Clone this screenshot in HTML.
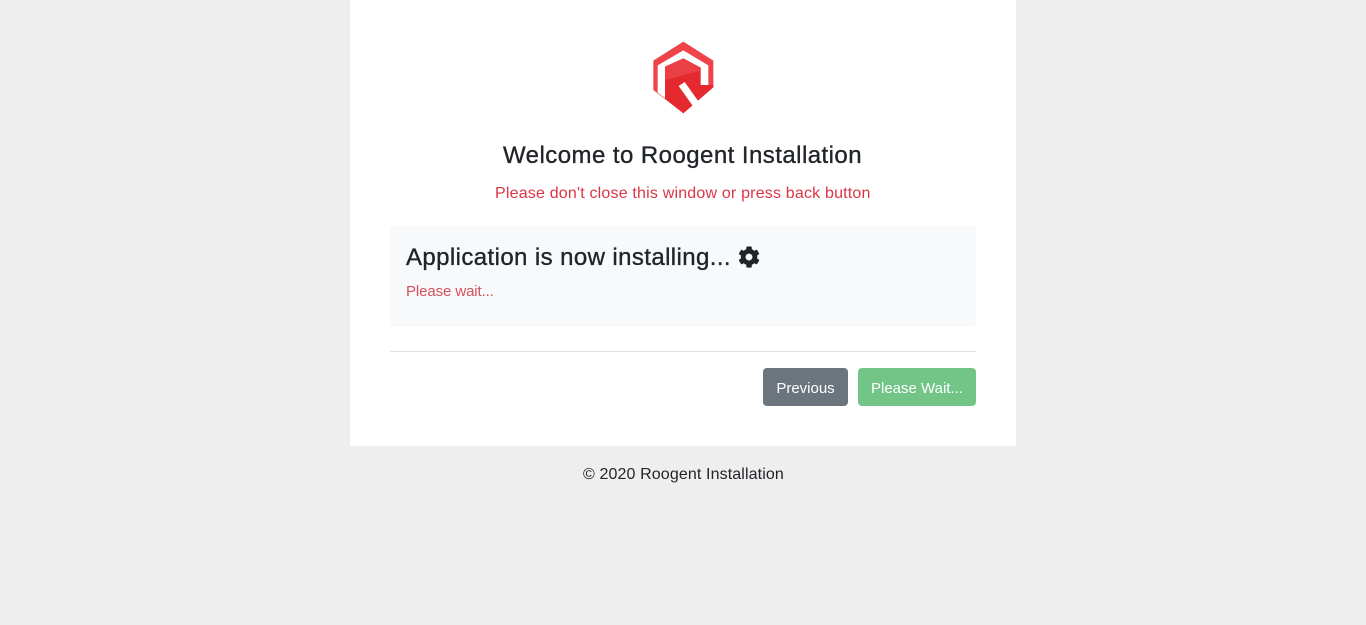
<!DOCTYPE html>
<html>
<head>
<meta charset="utf-8">
<style>
html,body{margin:0;padding:0;width:1366px;height:625px;overflow:hidden;background:#eee;font-family:"Liberation Sans",sans-serif;color:#212529}
#card{position:absolute;left:350px;top:0;width:666px;height:446px;background:#fff}
.t{position:absolute;white-space:nowrap;line-height:1.2}
.h{-webkit-text-stroke:.35px currentColor}
#box{position:absolute;left:390px;top:226px;width:586px;height:101px;background:#f8f9fa;border-radius:3px}
#hr{position:absolute;left:390px;top:351px;width:586px;height:1px;background:#e2e2e2}
.btn{position:absolute;top:368px;height:38px;line-height:41px;border-radius:4px;color:#fff;text-align:center;font-size:15px}
</style>
</head>
<body>
<div id="card"></div>
<svg style="position:absolute;left:640px;top:30px" width="90" height="95" viewBox="0 0 270 285">
<path d="M130 35L220 92V172L205 165V106L130 61L53 106V188L76 206V208L40 180V92Z" fill="#ee4449"/>
<path d="M130 85L182 113V165H205L220 165V172L130 250L75 207V110Z" fill="#e42a2f"/>
<path d="M130 85L182 113V122L75 150V110Z" fill="#ea4045"/>
<path d="M116 168L134 156L178 218L160 230Z" fill="#fff"/>
</svg>
<div class="t h" style="left:503px;top:142px;font-size:24px;letter-spacing:.45px">Welcome to Roogent Installation</div>
<div class="t" style="left:495px;top:184px;font-size:16px;letter-spacing:.19px;color:#dc3545">Please don't close this window or press back button</div>
<div id="box"></div>
<div class="t h" style="left:406px;top:244px;font-size:24px;letter-spacing:.4px">Application is now installing...</div>
<svg style="position:absolute;left:738px;top:246px" width="22" height="22" viewBox="0 0 512 512"><path fill="#212529" d="M487 316l-42-25c4-23 4-47 0-70l42-25c5-3 7-9 5-14-11-35-30-67-54-93-4-4-10-5-15-2l-42 25c-18-15-38-27-60-35V28c0-6-4-11-9-12-37-8-74-8-110 0-5 1-9 6-9 12v49c-22 8-42 20-60 35L91 87c-5-3-11-2-15 2-24 26-43 58-54 93-2 5 0 11 5 14l42 25c-4 23-4 47 0 70l-42 25c-5 3-7 9-5 14 11 35 30 67 54 93 4 4 10 5 15 2l42-25c18 15 38 27 60 35v49c0 6 4 11 9 12 37 8 74 8 110 0 5-1 9-6 9-12v-49c22-8 42-20 60-35l42 25c5 3 11 2 15-2 24-26 43-58 54-93 2-5 0-11-5-14zM256 336c-44 0-80-36-80-80s36-80 80-80 80 36 80 80-36 80-80 80z"/></svg>
<div class="t" style="left:406px;top:283px;font-size:15px;letter-spacing:-.1px;color:#d4505c">Please wait...</div>
<div id="hr"></div>
<div class="btn" style="left:763px;width:85px;background:#6c757d">Previous</div>
<div class="btn" style="left:858px;width:118px;background:#72c587">Please Wait...</div>
<div class="t" style="left:583px;top:465px;font-size:16px;letter-spacing:.12px">© 2020 Roogent Installation</div>
</body>
</html>
